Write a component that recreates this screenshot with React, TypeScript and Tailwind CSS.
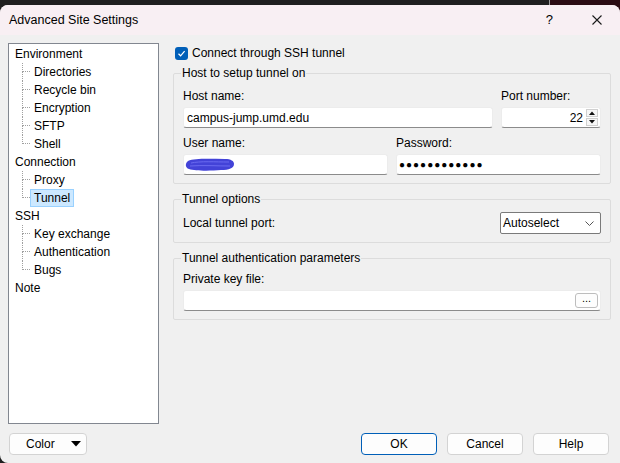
import React from "react";

type Node = { label: string; children: string[] };

const tree: Node[] = [
  { label: "Environment", children: ["Directories", "Recycle bin", "Encryption", "SFTP", "Shell"] },
  { label: "Connection", children: ["Proxy", "Tunnel"] },
  { label: "SSH", children: ["Key exchange", "Authentication", "Bugs"] },
  { label: "Note", children: [] },
];

function Group({ title, className, children }: { title: string; className?: string; children: React.ReactNode }) {
  return (
    <div className={`relative rounded-[2px] border border-[#dcdcdc] ${className ?? ""}`}>
      <span className="absolute -top-[9px] left-[7px] bg-[#f0f0f0] px-[1px] leading-[16px]">{title}</span>
      {children}
    </div>
  );
}

function Field({ children, className }: { children?: React.ReactNode; className?: string }) {
  return (
    <div
      className={`flex h-[21px] items-center rounded-[3px] border border-[#ececec] border-b-[#8b8b8b] bg-white ${className ?? ""}`}
    >
      {children}
    </div>
  );
}

function Button({ children, primary }: { children: React.ReactNode; primary?: boolean }) {
  return (
    <div
      className={`flex h-[22px] w-[76px] items-center justify-center rounded-[4px] border bg-[#fdfdfd] ${
        primary ? "border-[#005fb8]" : "border-[#d3d3d3]"
      }`}
    >
      {children}
    </div>
  );
}

export default function App() {
  return (
    <div className="flex h-[463px] w-[620px] flex-col overflow-hidden bg-[linear-gradient(to_right,#1f1f1f_549px,#9c9c9c_549px,#9c9c9c_550px,#2b0c13_550px)] pt-[5px] font-['Liberation_Sans',Arial,sans-serif] text-[12px] text-black">
      <div className="flex flex-1 flex-col overflow-hidden rounded-t-[8px] rounded-bl-[8px] bg-[#f0f0f0]">
        {/* Title bar */}
        <div className="flex h-[30px] items-center bg-[#f8eff3] pl-[9px]">
          <span className="flex-1 text-[12.5px]">Advanced Site Settings</span>
          <span className="mr-[39px] text-[13px]">?</span>
          <svg width="10" height="10" viewBox="0 0 10 10" className="mr-[18px]">
            <path d="M0.5 0.5 L9.5 9.5 M9.5 0.5 L0.5 9.5" stroke="#1a1a1a" strokeWidth="1.1" fill="none" />
          </svg>
        </div>

        {/* Body */}
        <div className="flex flex-col pl-[8px] pt-[8px]">
          <div className="flex">
            {/* Tree */}
            <div className="h-[381px] w-[151px] border border-[#828790] bg-white pt-[1px]">
              {tree.map((n) => (
                <div key={n.label}>
                  <div className="flex h-[18px] items-center pl-[6px]">{n.label}</div>
                  {n.children.map((c, i) => {
                    const last = i === n.children.length - 1;
                    const selected = c === "Tunnel";
                    return (
                      <div key={c} className="flex h-[18px] pl-[13px]">
                        <div className="flex w-[8px] flex-col">
                          <div className="h-[9px] border-b border-l border-dotted border-[#a0a0a0]" />
                          <div className={last ? "h-[9px]" : "h-[9px] border-l border-dotted border-[#a0a0a0]"} />
                        </div>
                        <div
                          className={`flex items-center border px-[3px] ${
                            selected ? "border-[#99d1ff] bg-[#cce8ff]" : "border-transparent"
                          }`}
                        >
                          {c}
                        </div>
                      </div>
                    );
                  })}
                </div>
              ))}
            </div>

            {/* Right panel */}
            <div className="ml-[14px] flex w-[438px] flex-col">
              <div className="flex h-[20px] items-center gap-[4px] pl-[2px]">
                <div className="flex h-[13px] w-[13px] items-center justify-center rounded-[3px] bg-[#005fb8]">
                  <svg width="9" height="9" viewBox="0 0 9 9">
                    <path d="M1.5 4.8 L3.6 6.8 L7.6 2.2" stroke="#fff" strokeWidth="1.2" fill="none" />
                  </svg>
                </div>
                <span>Connect through SSH tunnel</span>
              </div>

              <Group title="Host to setup tunnel on" className="mt-[10px] px-[9px] pb-[8px] pt-[14px]">
                <div className="flex gap-[8px]">
                  <div className="flex w-[310px] flex-col">
                    <span className="mb-[3px] leading-[16px]">Host name:</span>
                    <Field className="pl-[3px]">campus-jump.umd.edu</Field>
                  </div>
                  <div className="flex w-[100px] flex-col">
                    <span className="mb-[3px] leading-[16px]">Port number:</span>
                    <Field className="justify-end pr-[2px]">
                      <span className="mr-[3px]">22</span>
                      <div className="flex h-[17px] w-[12px] flex-col gap-[1px]">
                        <div className="flex flex-1 items-center justify-center border border-[#d0d0d0] bg-[#f7f7f7]">
                          <svg width="6" height="4" viewBox="0 0 6 4">
                            <path d="M0 4 L3 0.5 L6 4 Z" fill="#111" />
                          </svg>
                        </div>
                        <div className="flex flex-1 items-center justify-center border border-[#d0d0d0] bg-[#f7f7f7]">
                          <svg width="6" height="4" viewBox="0 0 6 4">
                            <path d="M0 0 L3 3.5 L6 0 Z" fill="#111" />
                          </svg>
                        </div>
                      </div>
                    </Field>
                  </div>
                </div>
                <div className="mt-[7px] flex gap-[8px]">
                  <div className="flex w-[205px] flex-col">
                    <span className="mb-[3px] leading-[16px]">User name:</span>
                    <Field className="pl-[1px]">
                      <svg width="50" height="15" viewBox="0 0 50 15">
                        <path
                          d="M3 4 C10 1 25 2 40 2 C46 2 49 4 49 7 C49 11 44 13 36 13 C25 14 10 14 4 12 C0 11 0 6 3 4 Z"
                          fill="#4343d8"
                        />
                        <path d="M6 6 C15 4 30 5 44 5 M5 9 C18 8 32 9 45 9" stroke="#6a6af0" strokeWidth="1" fill="none" />
                      </svg>
                    </Field>
                  </div>
                  <div className="flex w-[205px] flex-col">
                    <span className="mb-[3px] leading-[16px]">Password:</span>
                    <Field className="pl-[2px]">
                      <span className="text-[10px] tracking-[1px]">●●●●●●●●●●●●</span>
                    </Field>
                  </div>
                </div>
              </Group>

              <Group title="Tunnel options" className="mt-[15px] pb-[8px] pl-[9px] pr-[9px] pt-[12px]">
                <div className="flex h-[22px] items-center justify-between">
                  <span>Local tunnel port:</span>
                  <div className="flex h-[22px] w-[101px] items-center justify-between rounded-[2px] border border-[#7a7a7a] bg-white pl-[2px] pr-[6px]">
                    <span>Autoselect</span>
                    <svg width="9" height="5" viewBox="0 0 9 5">
                      <path d="M0.5 0.5 L4.5 4.5 L8.5 0.5" stroke="#555" strokeWidth="1" fill="none" />
                    </svg>
                  </div>
                </div>
              </Group>

              <Group title="Tunnel authentication parameters" className="mt-[15px] px-[9px] pb-[8px] pt-[12px]">
                <span className="mb-[3px] block leading-[16px]">Private key file:</span>
                <Field className="h-[20px] justify-end pr-[2px]">
                  <div className="flex h-[15px] w-[23px] items-center justify-center rounded-[3px] border border-[#bdbdbd] bg-[#fdfdfd] pb-[4px] text-[11px]">
                    ...
                  </div>
                </Field>
              </Group>
            </div>
          </div>

          {/* Bottom buttons */}
          <div className="mt-[9px] flex items-center pr-[11px]">
            <div className="ml-[1px] flex h-[22px] w-[78px] items-center rounded-[4px] border border-[#d3d3d3] bg-[#fdfdfd] pl-[16px] pr-[5px]">
              <span className="flex-1">Color</span>
              <svg width="10" height="6" viewBox="0 0 10 6">
                <path d="M0 0 L10 0 L5 5.5 Z" fill="#000" />
              </svg>
            </div>
            <div className="ml-auto flex gap-[10px]">
              <Button primary>OK</Button>
              <Button>Cancel</Button>
              <Button>Help</Button>
            </div>
          </div>
        </div>
      </div>
    </div>
  );
}
